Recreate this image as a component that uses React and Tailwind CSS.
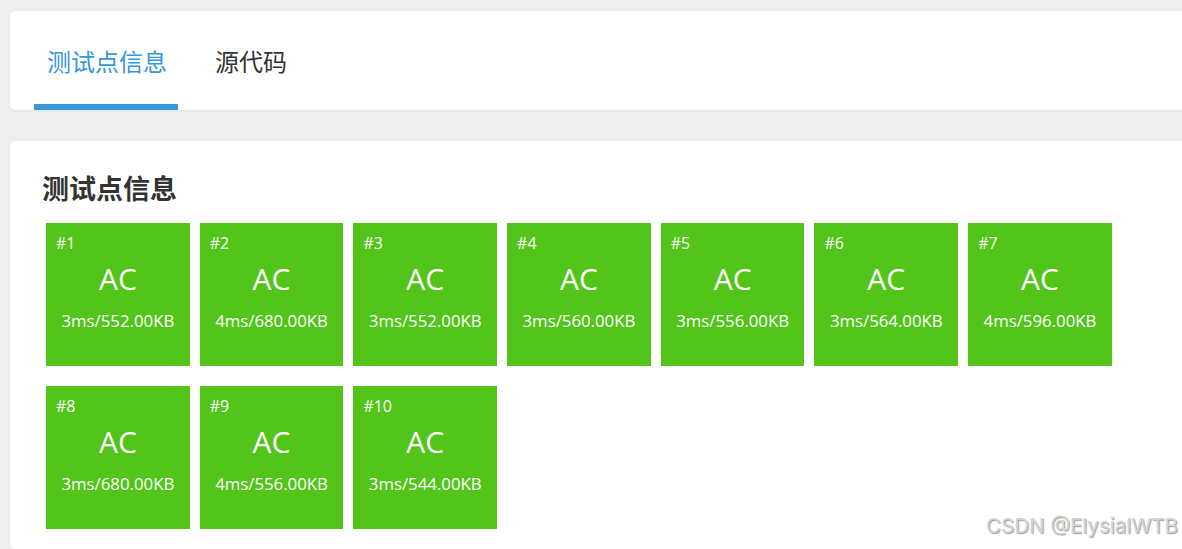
const cases = [
  { id: 1, time: 3, mem: '552.00' },
  { id: 2, time: 4, mem: '680.00' },
  { id: 3, time: 3, mem: '552.00' },
  { id: 4, time: 3, mem: '560.00' },
  { id: 5, time: 3, mem: '556.00' },
  { id: 6, time: 3, mem: '564.00' },
  { id: 7, time: 4, mem: '596.00' },
  { id: 8, time: 3, mem: '680.00' },
  { id: 9, time: 4, mem: '556.00' },
  { id: 10, time: 3, mem: '544.00' },
]

const font = "font-['Open_Sans','Noto_Sans_CJK_SC',sans-serif]"

export default function App() {
  return (
    <div className={`relative min-h-[549px] w-[1182px] overflow-hidden bg-[#eeeeee] pl-[10px] pt-[11px] ${font}`}>
      <div className="-mr-4 flex h-[99px] items-stretch gap-[25px] rounded-l-[5px] bg-white pl-[24px] shadow-[0_1px_3px_rgba(0,0,0,0.06)]">
        <div className="flex w-[144px] flex-col justify-end">
          <div className="flex flex-1 items-center pl-[13px] pt-[9px] text-[24px] text-[#3498db]">测试点信息</div>
          <div className="h-[6px] bg-[#3498db]" />
        </div>
        <div className="flex items-center px-[12px] pt-[3px] text-[24px] text-[#333]">源代码</div>
      </div>

      <div className="-mr-4 mt-[31px] rounded-l-[5px] bg-white pb-[20px] pl-[32px] pt-[29px] shadow-[0_1px_3px_rgba(0,0,0,0.06)]">
        <h2 className="text-[27px] font-bold leading-[38px] text-[#333]">测试点信息</h2>
        <div className="ml-[4px] mt-[15px] grid w-[1070px] grid-cols-[repeat(7,143.7px)] gap-x-[10px] gap-y-[20px]">
          {cases.map((c) => (
            <div key={c.id} className="flex h-[143px] flex-col bg-[#52c41a] px-[10px] pt-[9px] text-white">
              <span className="text-[16px] leading-[22px]">#{c.id}</span>
              <span className="mt-[5px] text-center text-[30px] leading-[40px]">AC</span>
              <span className="mt-[10px] text-center text-[16.8px] leading-[24px]">
                {c.time}ms/{c.mem}KB
              </span>
            </div>
          ))}
        </div>
      </div>

      <div className="absolute bottom-[7px] right-[4px] font-['Inter','Liberation_Sans',sans-serif] text-[20.5px] text-[#d4d4d4] [text-shadow:1px_1px_1px_#999]">
        CSDN @ElysialWTB
      </div>
    </div>
  )
}
